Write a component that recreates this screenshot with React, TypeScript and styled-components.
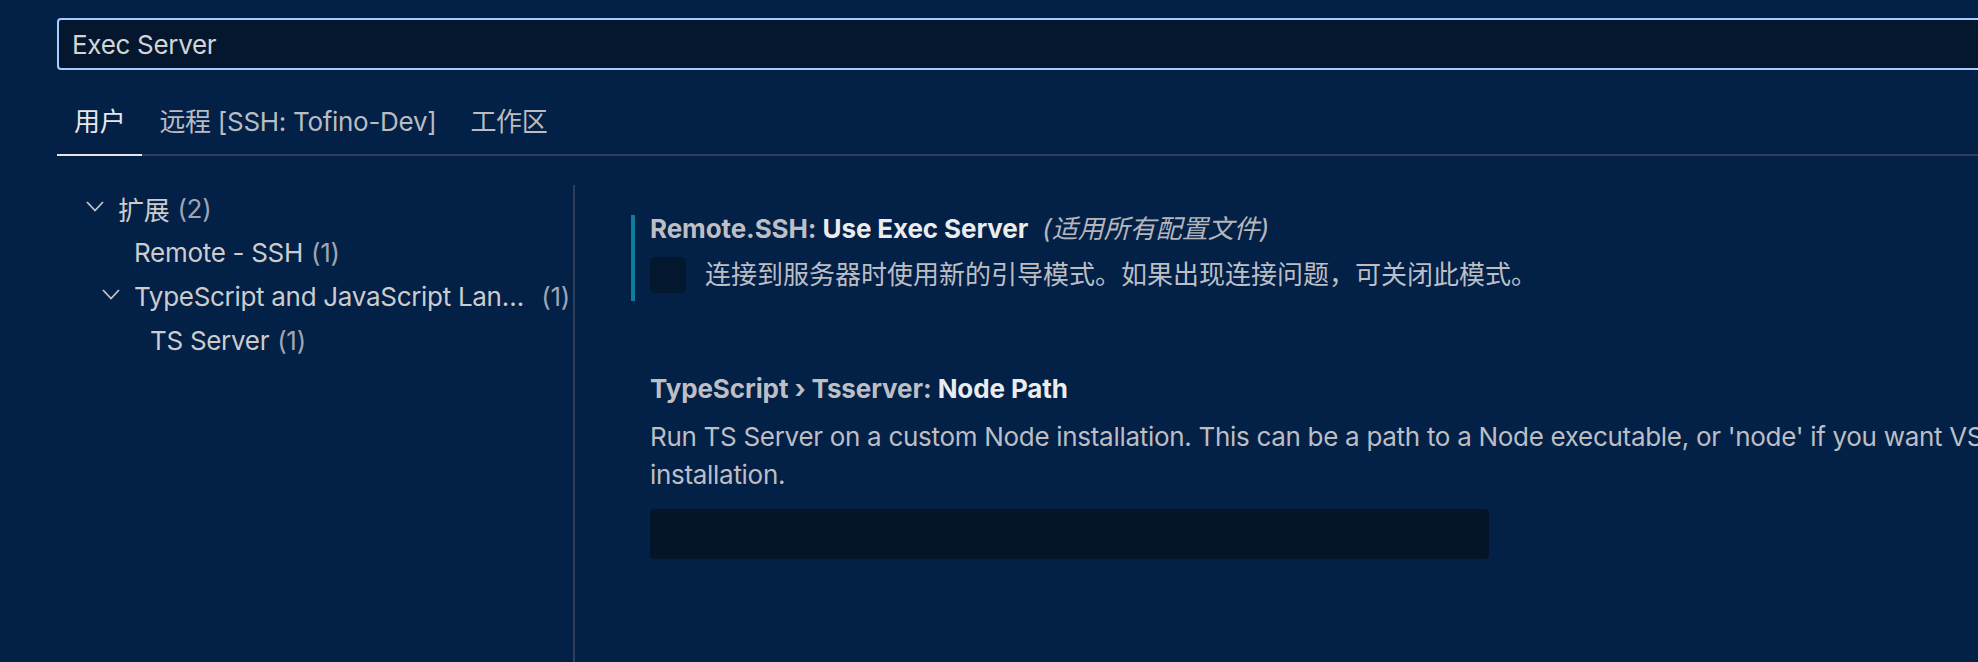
import React from "react";
import styled, { createGlobalStyle } from "styled-components";

const FONT = `Inter, "Noto Sans CJK SC", "DejaVu Sans", sans-serif`;

const GlobalStyle = createGlobalStyle`
    html, body {
        margin: 0;
        padding: 0;
        background: #032047;
        overflow: hidden;
    }
`;

const Page = styled.div`
    width: 100vw;
    height: 100vh;
    overflow: hidden;
    background: #032047;
    color: #cccccc;
    font-family: ${FONT};
    letter-spacing: -0.3px;
`;

const Header = styled.div`
    padding: 18px 0 0 57px;
`;

const SearchInput = styled.input`
    display: block;
    width: 2000px;
    height: 52px;
    box-sizing: border-box;
    margin: 0;
    padding: 0 0 0 13px;
    border: 2px solid #a9ccff;
    border-radius: 4px;
    outline: none;
    background: #04172f;
    color: #d4d4d4;
    font-family: ${FONT};
    font-size: 26px;
    letter-spacing: -0.3px;
`;

const TabBar = styled.div`
    display: flex;
    width: 2000px;
    border-bottom: 2px solid #2e3e5a;
`;

const Tab = styled.div<{ $active?: boolean }>`
    padding: 32px 17px 12px;
    margin-bottom: -2px;
    line-height: 40px;
    font-size: 26px;
    color: ${(p) => (p.$active ? "#e8e8e8" : "#b9bcc2")};
    border-bottom: 2px solid ${(p) => (p.$active ? "#e6e6e6" : "transparent")};
    white-space: nowrap;
`;

const Body = styled.div`
    display: flex;
    margin-top: 29px;
    height: calc(100vh - 185px);
`;

const Toc = styled.div`
    width: 573px;
    flex-shrink: 0;
    padding-top: 1px;
    border-right: 2px solid #2e3e5a;
`;

const TreeRow = styled.div<{ $level: number }>`
    display: flex;
    align-items: center;
    height: 44px;
    padding-left: ${(p) => 86 + (p.$level - 1) * 16}px;
    padding-right: 3px;
    font-size: 26px;
    color: #cccccc;
    white-space: nowrap;
`;

const Twistie = styled.span`
    width: 32px;
    flex-shrink: 0;
    display: flex;
    align-items: center;
    padding-bottom: 4px;
`;

const TreeLabel = styled.span`
    min-width: 0;
    overflow: hidden;
    text-overflow: ellipsis;
    padding-right: 4px;
`;

const TreeCount = styled.span`
    flex-shrink: 0;
    margin-left: 4px;
    color: #9ea5b2;
`;

const SettingsList = styled.div`
    flex: 1;
    min-width: 0;
    padding: 30px 0 0 56px;
`;

const SettingItem = styled.div<{ $modified?: boolean }>`
    border-left: 4px solid ${(p) => (p.$modified ? "#0c7d9d" : "transparent")};
    padding: 0 0 7px 15px;
    margin-bottom: 74px;
`;

const SettingTitle = styled.div`
    line-height: 28px;
    font-size: 26px;
    font-weight: 700;
    letter-spacing: -0.1px;
    white-space: nowrap;
`;

const Category = styled.span`
    color: #bdbfc4;
`;

const Key = styled.span`
    color: #ececec;
`;

const Scope = styled.span`
    margin-left: 14px;
    font-style: italic;
    font-weight: 400;
    color: #b4b6bb;
    letter-spacing: 0;
`;

const CheckboxRow = styled.div`
    display: flex;
    align-items: center;
    gap: 19px;
    margin-top: 13px;
`;

const Checkbox = styled.div`
    width: 36px;
    height: 36px;
    flex-shrink: 0;
    border-radius: 5px;
    background: #03182f;
`;

const Description = styled.div<{ $width?: number }>`
    font-size: 26px;
    line-height: 38px;
    color: #bcbec3;
    white-space: ${(p) => (p.$width ? "normal" : "nowrap")};
    width: ${(p) => (p.$width ? `${p.$width}px` : "auto")};
`;

const CheckboxLabel = styled(Description)`
    letter-spacing: 0;
`;

const DescriptionBlock = styled.div`
    margin-top: 15px;
`;

const TextInput = styled.div`
    margin-top: 15px;
    width: 839px;
    height: 50px;
    border-radius: 4px;
    background: #04152a;
`;

const Chevron: React.FC = () => (
    <svg width="18" height="11" viewBox="0 0 18 11">
        <polyline
            points="1,1 9,9.5 17,1"
            fill="none"
            stroke="#c5c5c5"
            strokeWidth="1.8"
        />
    </svg>
);

const tree = [
    { level: 1, label: "扩展", count: 2, open: true },
    { level: 2, label: "Remote - SSH", count: 1 },
    {
        level: 2,
        label: "TypeScript and JavaScript Language Features",
        count: 1,
        open: true,
    },
    { level: 3, label: "TS Server", count: 1 },
];

const App: React.FC = () => {
    return (
        <Page>
            <GlobalStyle />
            <Header>
                <SearchInput defaultValue="Exec Server" readOnly />
                <TabBar>
                    <Tab $active>用户</Tab>
                    <Tab>远程 [SSH: Tofino-Dev]</Tab>
                    <Tab>工作区</Tab>
                </TabBar>
            </Header>
            <Body>
                <Toc>
                    {tree.map((item) => (
                        <TreeRow key={item.label} $level={item.level}>
                            <Twistie>{item.open && <Chevron />}</Twistie>
                            <TreeLabel>{item.label}</TreeLabel>
                            <TreeCount>({item.count})</TreeCount>
                        </TreeRow>
                    ))}
                </Toc>
                <SettingsList>
                    <SettingItem $modified>
                        <SettingTitle>
                            <Category>Remote.SSH: </Category>
                            <Key>Use Exec Server</Key>
                            <Scope>(适用所有配置文件)</Scope>
                        </SettingTitle>
                        <CheckboxRow>
                            <Checkbox />
                            <CheckboxLabel>
                                连接到服务器时使用新的引导模式。如果出现连接问题，可关闭此模式。
                            </CheckboxLabel>
                        </CheckboxRow>
                    </SettingItem>
                    <SettingItem>
                        <SettingTitle>
                            <Category>TypeScript › Tsserver: </Category>
                            <Key>Node Path</Key>
                        </SettingTitle>
                        <DescriptionBlock>
                            <Description $width={1700}>
                                Run TS Server on a custom Node installation.
                                This can be a path to a Node executable, or
                                'node' if you want VS Code to detect a Node
                                installation.
                            </Description>
                        </DescriptionBlock>
                        <TextInput />
                    </SettingItem>
                </SettingsList>
            </Body>
        </Page>
    );
};

export default App;
